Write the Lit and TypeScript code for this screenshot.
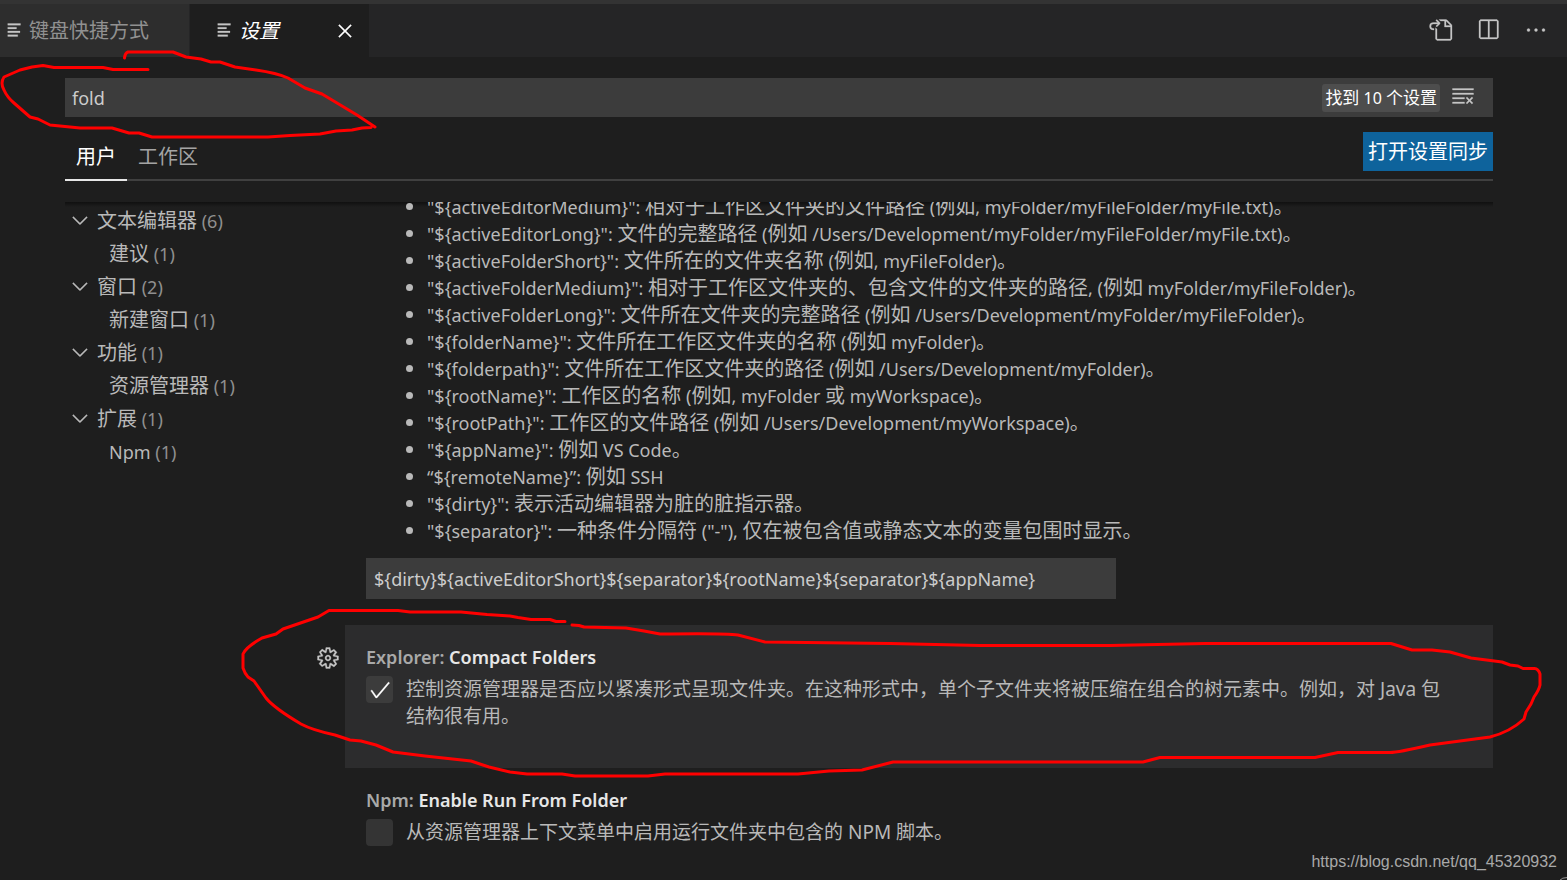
import { LitElement, html, css, svg } from "lit";
import { customElement, property, state } from "lit/decorators.js";
import { classMap } from "lit/directives/class-map.js";

const ICONS: Record<string, string> = {
  lines: "M2.200 2h10.200v1.300H2.200zM2.200 5h7v1.300h-7zM2.200 8h9.800v1.300H2.200zM2.200 11h8v1.300h-8z",
  close:
    "M8 8.707l3.646 3.647.708-.707L8.707 8l3.647-3.646-.707-.708L8 7.293 4.354 3.646l-.707.708L7.293 8l-3.646 3.646.707.708L8 8.707z",
  goToFile:
    "M6 5.914l2.06-2.06v-.708L5.915 1l-.707.707.043.043.25.25 1 1h-3a2.5 2.5 0 0 0 0 5H4V7h-.5a1.5 1.5 0 1 1 0-3h3L5.207 5.293 5.914 6 6 5.914zM11 2H8.328l-1-1H12l.71.29 3 3L16 5v9l-1 1H6l-1-1V6.5l1 .847V14h9V6h-4V2zm1 0v3h3l-3-3z",
  split: "M14 1H3L2 2v11l1 1h11l1-1V2l-1-1zM8 13H3V2h5v11zm6 0H9V2h5v11z",
  more: "M4 8a1 1 0 1 1-2 0 1 1 0 0 1 2 0zm5 0a1 1 0 1 1-2 0 1 1 0 0 1 2 0zm5 0a1 1 0 1 1-2 0 1 1 0 0 1 2 0z",
  clear:
    "M10 12.6l.7.7 1.6-1.6 1.6 1.6.8-.7L13 11l1.7-1.6-.8-.8-1.6 1.7-1.6-1.7-.7.8 1.6 1.6-1.6 1.6zM1 4h14V3H1v1zm0 3h14V6H1v1zm8 2.5V9H1v1h8v-.5zM9 13v-1H1v1h8z",
  chevron:
    "M7.976 10.072l4.357-4.357.62.618L8.284 11h-.618L3 6.333l.619-.618 4.357 4.357z",
  gear:
    "M9.1 4.4L8.6 2H7.4l-.5 2.4-.7.3-2-1.3-.9.8 1.3 2-.2.7-2.4.5v1.2l2.4.5.3.8-1.3 2 .8.8 2-1.3.8.3.4 2.3h1.2l.5-2.4.8-.3 2 1.3.8-.8-1.3-2 .3-.8 2.3-.4V7.4l-2.4-.5-.3-.8 1.3-2-.8-.8-2 1.3-.7-.2zM9.4 1l.5 2.4L12 2.1l2 2-1.4 2.1 2.4.4v2.8l-2.4.5L14 12l-2 2-2.1-1.4-.5 2.4H6.6l-.5-2.4L4 13.9l-2-2 1.4-2.1L1 9.4V6.6l2.4-.5L2.1 4l2-2 2.1 1.4.4-2.4h2.8zm.6 7c0 1.1-.9 2-2 2s-2-.9-2-2 .9-2 2-2 2 .9 2 2zM8 9c.6 0 1-.4 1-1s-.4-1-1-1-1 .4-1 1 .4 1 1 1z",
  check:
    "M14.431 3.323l-8.47 10-.79-.036-3.35-4.77.818-.574 2.978 4.24 8.051-9.506.764.646z",
};

const VARIABLES = [
  '"${activeEditorMedium}": 相对于工作区文件夹的文件路径 (例如, myFolder/myFileFolder/myFile.txt)。',
  '"${activeEditorLong}": 文件的完整路径 (例如 /Users/Development/myFolder/myFileFolder/myFile.txt)。',
  '"${activeFolderShort}": 文件所在的文件夹名称 (例如, myFileFolder)。',
  '"${activeFolderMedium}": 相对于工作区文件夹的、包含文件的文件夹的路径, (例如 myFolder/myFileFolder)。',
  '"${activeFolderLong}": 文件所在文件夹的完整路径 (例如 /Users/Development/myFolder/myFileFolder)。',
  '"${folderName}": 文件所在工作区文件夹的名称 (例如 myFolder)。',
  '"${folderpath}": 文件所在工作区文件夹的路径 (例如 /Users/Development/myFolder)。',
  '"${rootName}": 工作区的名称 (例如, myFolder 或 myWorkspace)。',
  '"${rootPath}": 工作区的文件路径 (例如 /Users/Development/myWorkspace)。',
  '"${appName}": 例如 VS Code。',
  '“${remoteName}”: 例如 SSH',
  '"${dirty}": 表示活动编辑器为脏的脏指示器。',
  '"${separator}": 一种条件分隔符 ("-"), 仅在被包含值或静态文本的变量包围时显示。',
];

const TREE = [
  { name: "文本编辑器", count: 6, children: [{ name: "建议", count: 1 }] },
  { name: "窗口", count: 2, children: [{ name: "新建窗口", count: 1 }] },
  { name: "功能", count: 1, children: [{ name: "资源管理器", count: 1 }] },
  { name: "扩展", count: 1, children: [{ name: "Npm", count: 1 }] },
];

/** Sets the Chinese runs of a text in their own, slightly larger size. */
const mixed = (text: string) =>
  text
    .split(/([\u3000-\u9fff\uff00-\uffef]+)/)
    .filter((run) => run !== "")
    .map((run) => (/[\u3000-\u9fff\uff00-\uffef]/.test(run) ? html`<span class="han">${run}</span>` : run));

@customElement("code-icon")
class CodeIcon extends LitElement {
  @property() name = "";
  static styles = css`
    :host {
      display: block;
      flex: none;
      width: 24px;
      height: 24px;
    }
    svg {
      display: block;
      width: 100%;
      height: 100%;
      fill: currentColor;
      stroke: currentColor;
      stroke-width: 0.2;
      overflow: visible;
    }
  `;
  render() {
    return html`<svg viewBox="0 0 16 16" aria-hidden="true">
      ${svg`<path fill-rule="evenodd" d=${ICONS[this.name] ?? ""}></path>`}
    </svg>`;
  }
}

@customElement("setting-check")
class SettingCheck extends LitElement {
  @property() category = "";
  @property() label = "";
  @property() description = "";
  @property({ type: Boolean }) checked = false;
  @property({ type: Boolean }) focused = false;

  static styles = css`
    :host {
      display: block;
    }
    .row {
      display: grid;
      grid-template-columns: 24px minmax(0, 1fr);
      column-gap: 5px;
      margin-left: -1px;
    }
    .gear {
      grid-column: 1;
      height: 24px;
      margin: 21px 0 0;
      padding: 0;
      border: 0;
      background: none;
      color: #c5c5c5;
    }
    .card {
      grid-column: 2;
      padding: 19px 40px 21px 21px;
    }
    .focused .card {
      min-height: 103px;
      background: #2c2c2d;
    }
    .title {
      margin: 0;
      font-size: 18px;
      line-height: 27px;
      font-weight: 600;
      color: #a9a9a9;
    }
    .name {
      color: #e7e7e7;
    }
    .body {
      display: grid;
      grid-template-columns: 27px minmax(0, 1fr);
      column-gap: 13px;
      margin-top: 5px;
      font-size: 19px;
      line-height: 27px;
    }
    .box {
      display: grid;
      width: 27px;
      height: 27px;
      place-items: center;
    }
    .box > * {
      grid-area: 1 / 1;
    }
    input {
      appearance: none;
      width: 27px;
      height: 27px;
      margin: 0;
      border-radius: 4px;
      background: #3c3c3c;
    }
    input:not(:checked) {
      background: #343434;
    }
    .tick {
      color: #fff;
      pointer-events: none;
    }
  `;

  render() {
    return html`<div class=${classMap({ row: true, focused: this.focused })}>
      ${this.focused
        ? html`<button class="gear" aria-label="更多操作">
            <code-icon name="gear"></code-icon>
          </button>`
        : null}
      <div class="card">
        <h3 class="title">${this.category}: <span class="name">${this.label}</span></h3>
        <div class="body">
          <span class="box">
            <input
              id="toggle"
              type="checkbox"
              .checked=${this.checked}
              @change=${(e: Event) => (this.checked = (e.target as HTMLInputElement).checked)}
            />
            ${this.checked ? html`<code-icon class="tick" name="check"></code-icon>` : null}
          </span>
          <label for="toggle">${this.description}</label>
        </div>
      </div>
    </div>`;
  }
}

@customElement("app-root")
class AppRoot extends LitElement {
  @state() private scope = "user";

  static styles = css`
    :host {
      display: flex;
      flex-direction: column;
      position: relative;
      height: 100vh;
      overflow: hidden;
      background: #1e1e1e;
      color: #b9b9b9;
      font: 18px/27px "Noto Sans", "Noto Sans CJK SC", sans-serif;
    }
    button,
    input {
      font: inherit;
      color: inherit;
    }
    button {
      padding: 0;
      border: 0;
      background: none;
    }
    ul {
      margin: 0;
      padding: 0;
      list-style: none;
    }
    .han {
      font-size: 20px;
      line-height: 1;
    }
    .tabs {
      display: flex;
      flex: none;
      height: 53px;
      border-top: 4px solid #333;
      background: #252526;
    }
    .tab {
      display: flex;
      align-items: center;
      gap: 4px;
      padding: 0 40px 0 5px;
      background: #2d2d2d;
      border-right: 1px solid #252526;
      color: #919191;
    }
    .tab-name {
      padding-top: 2px;
    }
    .tab.active {
      padding: 0 12px 0 25px;
      background: #1e1e1e;
      color: #fff;
    }
    .tab.active .tab-name {
      font-style: italic;
      margin-right: 50px;
    }
    .tab-icon {
      width: 20px;
      height: 20px;
      color: #c5c5c5;
    }
    .actions {
      display: flex;
      align-items: center;
      gap: 24px;
      margin-left: auto;
      padding: 0 19px 2px 0;
      color: #c5c5c5;
    }
    .page {
      display: flex;
      flex: 1;
      flex-direction: column;
      min-height: 0;
      padding: 21px 74px 0 65px;
    }
    .search {
      display: flex;
      flex: none;
      align-items: center;
      height: 39px;
      padding-right: 18px;
      background: #3c3c3c;
    }
    .search input {
      flex: 1;
      min-width: 0;
      padding: 1px 7px 0;
      border: 0;
      outline: 0;
      background: none;
      color: #ccc;
    }
    .found {
      padding: 0 3px;
      margin-right: 11px;
      border-radius: 3px;
      background: #4d4d4d;
      color: #fff;
      font-size: 16px;
      line-height: 28px;
    }
    .found .han {
      font-size: 17px;
    }
    .clear {
      padding-bottom: 3px;
      color: #c5c5c5;
    }
    .scopes {
      display: flex;
      flex: none;
      justify-content: space-between;
      margin-top: 15px;
      border-bottom: 2px solid #404040;
    }
    .scope-list {
      display: flex;
      margin-bottom: -2px;
    }
    .scope {
      padding: 3px 11px 0;
      border-bottom: 2px solid transparent;
      color: #a4a4a4;
    }
    .scope.active {
      border-color: #e7e7e7;
      color: #fff;
    }
    .sync {
      height: 39px;
      margin-bottom: 8px;
      padding: 2px 5px 0;
      background: #0e639c;
      color: #fff;
    }
    .content {
      display: grid;
      flex: 1;
      grid-template-columns: 252px minmax(0, 1fr);
      min-height: 0;
      margin-top: 21px;
      overflow: hidden;
      background: linear-gradient(#101010, #1e1e1e) no-repeat top / 100% 5px;
    }
    .tree {
      padding: 3px 0 0 3px;
      line-height: 33px;
    }
    .node {
      display: flex;
      align-items: center;
      gap: 5px;
    }
    .node code-icon {
      margin-bottom: 3px;
    }
    .leaf {
      display: block;
      padding-left: 41px;
      color: inherit;
      text-decoration: none;
    }
    .count {
      color: #8f8f8f;
    }
    .variables {
      margin: -9px 0 14px;
      padding: 0 0 0 110px;
      list-style: disc;
    }
    .variables li {
      height: 27px;
      white-space: nowrap;
    }
    .variables li::marker {
      font-size: 20px;
    }
    .value {
      display: block;
      box-sizing: border-box;
      width: 750px;
      max-width: calc(100% - 49px);
      height: 41px;
      margin: 0 0 26px 49px;
      padding: 0 8px;
      border: 0;
      background: #3c3c3c;
      color: #ccc;
    }
    .ink {
      position: absolute;
      top: 0;
      left: 0;
      width: 1567px;
      height: 880px;
      pointer-events: none;
      fill: none;
      stroke: #f00;
      stroke-width: 3;
      stroke-linecap: round;
      stroke-linejoin: round;
    }
    .mark {
      position: absolute;
      right: 10px;
      bottom: 8px;
      color: #a9a9a9;
      font: 16px/20px "Liberation Sans", sans-serif;
    }
  `;

  private scopeButton(id: string, text: string) {
    return html`<button
      class=${classMap({ scope: true, active: this.scope === id })}
      @click=${() => (this.scope = id)}
    >
      ${mixed(text)}
    </button>`;
  }

  render() {
    return html`
      <header class="tabs">
        <button class="tab">
          <code-icon class="tab-icon" name="lines"></code-icon><span class="tab-name">${mixed("键盘快捷方式")}</span>
        </button>
        <div class="tab active">
          <code-icon class="tab-icon" name="lines"></code-icon><span class="tab-name">${mixed("设置")}</span>
          <button aria-label="关闭"><code-icon name="close"></code-icon></button>
        </div>
        <div class="actions">
          <button aria-label="打开设置文件"><code-icon name="goToFile"></code-icon></button>
          <button aria-label="拆分编辑器"><code-icon name="split"></code-icon></button>
          <button aria-label="更多"><code-icon name="more"></code-icon></button>
        </div>
      </header>
      <main class="page">
        <div class="search">
          <input type="text" aria-label="搜索设置" value="fold" />
          <span class="found">${mixed("找到 10 个设置")}</span>
          <button class="clear" aria-label="清除"><code-icon name="clear"></code-icon></button>
        </div>
        <div class="scopes">
          <div class="scope-list">
            ${this.scopeButton("user", "用户")}${this.scopeButton("workspace", "工作区")}
          </div>
          <button class="sync">${mixed("打开设置同步")}</button>
        </div>
        <div class="content">
          <nav class="tree">
            <ul>
              ${TREE.map(
                (group) => html`<li>
                  <button class="node">
                    <code-icon name="chevron"></code-icon>
                    <span>${mixed(group.name)} <span class="count">(${group.count})</span></span>
                  </button>
                  ${group.children.map(
                    (leaf) =>
                      html`<a class="leaf" href="#">${mixed(leaf.name)} <span class="count">(${leaf.count})</span></a>`
                  )}
                </li>`
              )}
            </ul>
          </nav>
          <section>
            <ul class="variables">
              ${VARIABLES.map((text) => html`<li>${mixed(text)}</li>`)}
            </ul>
            <input
              class="value"
              type="text"
              aria-label="Window: Title"
              .value=${"${dirty}${activeEditorShort}${separator}${rootName}${separator}${appName}"}
            />
            <setting-check
              category="Explorer"
              label="Compact Folders"
              description="控制资源管理器是否应以紧凑形式呈现文件夹。在这种形式中，单个子文件夹将被压缩在组合的树元素中。例如，对 Java 包结构很有用。"
              checked
              focused
            ></setting-check>
            <setting-check
              category="Npm"
              label="Enable Run From Folder"
              description="从资源管理器上下文菜单中启用运行文件夹中包含的 NPM 脚本。"
            ></setting-check>
          </section>
        </div>
      </main>
      <svg class="ink" viewBox="0 0 1567 880" aria-hidden="true">
        <path d="M148 69.500H113L103 67.500H54L43 65.500L32 67L20 70L4 77Q0 83 4 90Q7 97 14 103L30 117L38 119L50 125L80 128H112L129 133H139L152 137H268L290 135.500L320 134L336 131L352 130L362 128L371 127.500M375 127L357 115L322 94L305 88L288 78Q277 73 256 70L235 67L220 62H211L201 59L186 57L173 52H128Q125 53 124.500 58" />
        <path d="M565 621.500H556L550 619.500H531L518 617.500L510 616L487 614.500L461 612H410L398 610.500H329L318 617L283 629L276 634L262 638Q246 647 243 654V668Q245 674 248 677L254 681L266 698Q274 708 301 724Q312 730 335 735L350 740L361 741L376 745L393 752L425 756L471 761L489 767L510 772L527 774H562L575 776H648L665 774H798L829 771L862 770L893 762H1143L1160 757.500H1315L1338 752.500H1390Q1398 752.500 1430 745L1490 737Q1510 732 1524 719L1526 712L1531 704L1534 697Q1539 690 1540 685V674Q1538 668 1534 668.500H1523L1518 666L1510 665L1502 662L1471 658L1450 652L1432 650H1412L1391 643.500H1205L1110 645.500H980L890 643.500L765 642L738 635Q725 633 660 634L644 631L626 628L584 627L579 625.500L572 625" />
        <path d="M1560 880Q1562 877.500 1567 877.500" stroke="#999" stroke-width="1" />
      </svg>
      <span class="mark">https://blog.csdn.net/qq_45320932</span>
    `;
  }
}
